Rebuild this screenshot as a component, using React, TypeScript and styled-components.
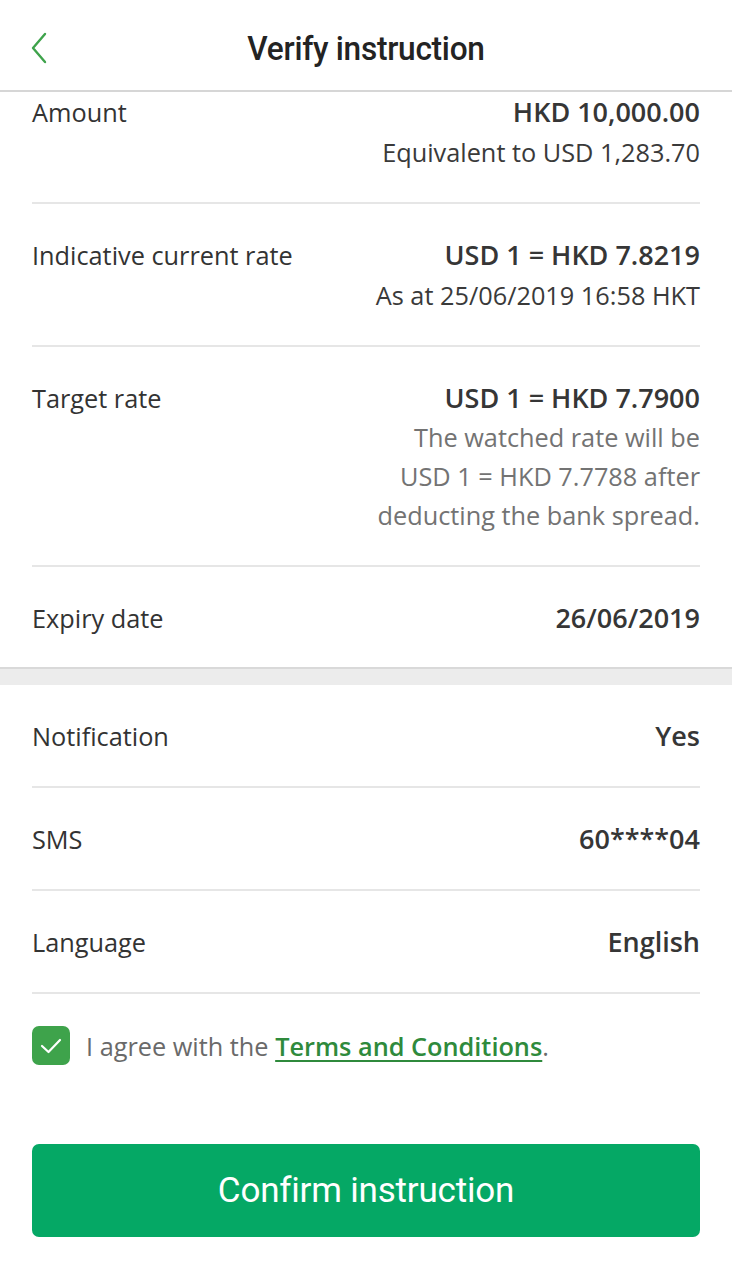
import React from 'react';
import styled, {createGlobalStyle} from 'styled-components';

const GlobalStyle = createGlobalStyle`
  html, body {
    margin: 0;
    padding: 0;
    background: #fff;
  }

  body {
    font-family: "Open Sans", "Liberation Sans", sans-serif;
    color: #333;
  }
`

const Page = styled.div`
  width: 732px;
  min-height: 1269px;
  display: flex;
  flex-direction: column;
  background: #fff;
`

const Header = styled.header`
  height: 90px;
  display: grid;
  grid-template-columns: 80px 1fr 80px;
  align-items: center;
  border-bottom: 2px solid #d6d6d6;
`

const BackButton = styled.button`
  border: none;
  background: none;
  padding: 6px 0 0 30px;
  height: 40px;
  display: flex;
  align-items: center;
  cursor: pointer;
`

const Title = styled.h1`
  margin: 6px 0 0;
  text-align: center;
  font-family: Roboto, "Liberation Sans", sans-serif;
  font-weight: 500;
  font-size: 34px;
  letter-spacing: -0.3px;
  color: #232323;
  transform: scaleX(0.93);
`

const Section = styled.section`
  padding: 0 32px;
`

const Row = styled.div<{$first?: boolean; $last?: boolean}>`
  display: flex;
  justify-content: space-between;
  align-items: flex-start;
  gap: 24px;
  padding: ${p => (p.$first ? '0' : '31px')} 0 ${p => (p.$last ? '29px' : '30px')};
  border-bottom: ${p => (p.$last ? 'none' : '2px solid #e6e6e6')};
  font-size: 25.3px;
  line-height: 40px;
`

const Label = styled.div`
  color: #333;
  white-space: nowrap;
`

const Values = styled.div`
  text-align: right;
  display: flex;
  flex-direction: column;
  align-items: flex-end;
`

const Value = styled.div`
  font-weight: 600;
  font-size: 27px;
  color: #363636;
`

const Sub = styled.div<{$muted?: boolean}>`
  color: ${p => (p.$muted ? '#737373' : '#3a3a3a')};
  line-height: ${p => (p.$muted ? '39px' : '40px')};
  max-width: ${p => (p.$muted ? '340px' : 'none')};
`

const Band = styled.div`
  height: 16px;
  background: #ececec;
  border-top: 2px solid #d9d9d9;
`

const Agree = styled.label`
  display: flex;
  align-items: center;
  gap: 16px;
  padding: 32px 32px 0;
  font-size: 25.3px;
  color: #6a6a6a;
`

const Check = styled.span`
  width: 38px;
  height: 39px;
  border-radius: 7px;
  background: #3ea34b;
  display: flex;
  align-items: center;
  justify-content: center;
  flex-shrink: 0;
`

const TermsLink = styled.a`
  color: #2f8a3c;
  font-weight: 600;
  text-decoration: underline;
  text-underline-offset: 4px;
  text-decoration-thickness: 2px;
`

const Footer = styled.div`
  padding: 79px 32px 0;
`

const ConfirmButton = styled.button`
  width: 100%;
  height: 93px;
  border: none;
  border-radius: 7px;
  background: #05a865;
  color: #fff;
  font-family: Roboto, "Liberation Sans", sans-serif;
  font-size: 35px;
  font-weight: 400;
  letter-spacing: -0.2px;
  cursor: pointer;
`

type Detail = {
  label: string;
  value: string;
  subs?: string[];
  muted?: boolean;
}

const rateDetails: Detail[] = [
  {label: 'Amount', value: 'HKD 10,000.00', subs: ['Equivalent to USD 1,283.70']},
  {label: 'Indicative current rate', value: 'USD 1 = HKD 7.8219', subs: ['As at 25/06/2019 16:58 HKT']},
  {
    label: 'Target rate',
    value: 'USD 1 = HKD 7.7900',
    subs: ['The watched rate will be USD 1 = HKD 7.7788 after deducting the bank spread.'],
    muted: true,
  },
  {label: 'Expiry date', value: '26/06/2019'},
]

const notifyDetails: Detail[] = [
  {label: 'Notification', value: 'Yes'},
  {label: 'SMS', value: '60****04'},
  {label: 'Language', value: 'English'},
]

const renderRow = (d: Detail, first?: boolean, last?: boolean) => (
  <Row key={d.label} $first={first} $last={last}>
    <Label>{d.label}</Label>
    <Values>
      <Value>{d.value}</Value>
      {d.subs?.map(s => (
        <Sub key={s} $muted={d.muted}>{s}</Sub>
      ))}
    </Values>
  </Row>
)

export default function App() {
  return (
    <Page>
      <GlobalStyle/>
      <Header>
        <BackButton aria-label="Back">
          <svg width="18" height="32" viewBox="0 0 18 32" fill="none">
            <path d="M15 2 L3 16 L15 30" stroke="#3ea34b" strokeWidth="2.4" strokeLinecap="round" strokeLinejoin="round"/>
          </svg>
        </BackButton>
        <Title>Verify instruction</Title>
        <div/>
      </Header>

      <Section>
        {rateDetails.map((d, i) => renderRow(d, i === 0, i === rateDetails.length - 1))}
      </Section>

      <Band/>

      <Section>
        {notifyDetails.map(d => renderRow(d))}
      </Section>

      <Agree>
        <Check>
          <svg width="22" height="16" viewBox="0 0 22 16" fill="none">
            <path d="M2 8 L8.5 14 L20 2" stroke="#fff" strokeWidth="2.2" strokeLinecap="round" strokeLinejoin="round"/>
          </svg>
        </Check>
        <span>
          I agree with the <TermsLink href="#">Terms and Conditions</TermsLink>.
        </span>
      </Agree>

      <Footer>
        <ConfirmButton>Confirm instruction</ConfirmButton>
      </Footer>
    </Page>
  );
}
